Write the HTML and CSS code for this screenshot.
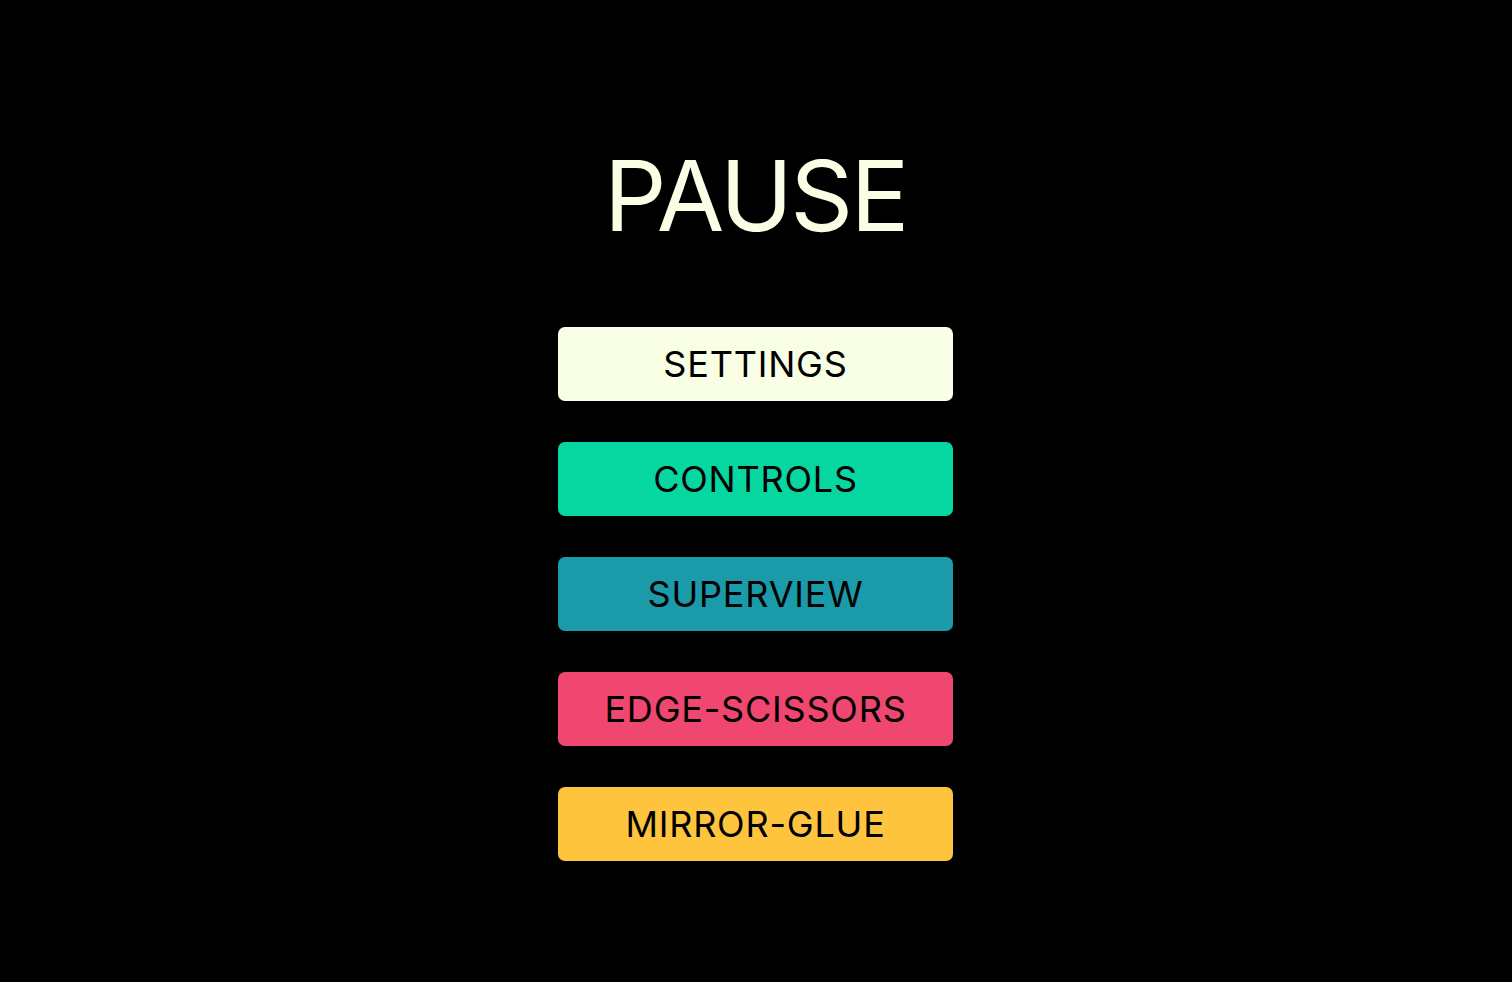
FILE: index.html
```html
<!DOCTYPE html>
<html lang="en">
<head>
<meta charset="utf-8">
<title>Pause</title>
<link rel="stylesheet" href="styles.css">
</head>
<body>
<main class="pause">
  <h1 class="pause-title">PAUSE</h1>
  <nav class="pause-menu">
    <button class="menu-btn btn-settings">SETTINGS</button>
    <button class="menu-btn btn-controls">CONTROLS</button>
    <button class="menu-btn btn-superview">SUPERVIEW</button>
    <button class="menu-btn btn-scissors">EDGE-SCISSORS</button>
    <button class="menu-btn btn-glue">MIRROR-GLUE</button>
  </nav>
</main>
</body>
</html>
```
FILE: styles.css
```css
html, body {
  margin: 0;
  padding: 0;
  background: #000;
  height: 100%;
}
body {
  font-family: Inter, "Noto Sans", sans-serif;
}
.pause {
  display: flex;
  flex-direction: column;
  align-items: center;
  padding-top: 140px;
  padding-right: 1px;
}
.pause-title {
  margin: 0;
  color: #F8FFE5;
  font-weight: 400;
  font-size: 98px;
  line-height: 112px;
  letter-spacing: -2.6px;
}
.pause-menu {
  display: flex;
  flex-direction: column;
  gap: 41px;
  margin-top: 75px;
}
.menu-btn {
  width: 395px;
  height: 74px;
  border: none;
  border-radius: 7px;
  font-family: inherit;
  font-size: 36px;
  font-weight: 400;
  letter-spacing: 0.8px;
  color: #000;
  padding: 0;
  cursor: pointer;
}
.btn-settings { background: #F8FFE5; }
.btn-controls { background: #06D6A0; }
.btn-superview { background: #1B9AAA; }
.btn-scissors { background: #EF476F; }
.btn-glue { background: #FFC43D; }
```
